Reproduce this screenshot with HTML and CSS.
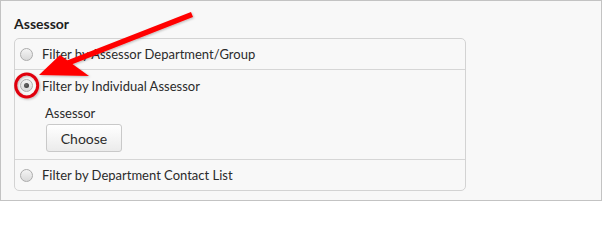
FILE: index.html
```
<!DOCTYPE html>
<html>
<head>
<meta charset="utf-8">
<link rel="stylesheet" href="styles.css">
</head>
<body>
<div class="frame">
  <h2 class="title">Assessor</h2>
  <div class="panel">
    <div class="row">
      <div class="option"><span class="radio"></span><span class="label">Filter by Assessor Department/Group</span></div>
    </div>
    <div class="row row-open">
      <div class="option"><span class="radio checked"></span><span class="label">Filter by Individual Assessor</span></div>
      <div class="sub">
        <div class="sub-label">Assessor</div>
        <button class="btn">Choose</button>
      </div>
    </div>
    <div class="row">
      <div class="option"><span class="radio"></span><span class="label">Filter by Department Contact List</span></div>
    </div>
  </div>
  <svg class="annot" width="602" height="201" viewBox="0 0 602 201">
    <defs>
      <filter id="sh" x="-20%" y="-20%" width="140%" height="140%">
        <feDropShadow dx="1" dy="1" stdDeviation="0.8" flood-color="#000" flood-opacity="0.25"/>
      </filter>
    </defs>
    <ellipse cx="26.7" cy="85.5" rx="11" ry="11.5" fill="none" stroke="#e00010" stroke-width="3" filter="url(#sh)"/>
    <g filter="url(#sh)" fill="#ff0000">
      <line x1="192" y1="14.5" x2="68" y2="63" stroke="#ff0000" stroke-width="5.5"/>
      <polygon points="39,75 60,55 89,76"/>
    </g>
  </svg>
</div>
</body>
</html>
```
FILE: styles.css
```
html, body {
  margin: 0;
  padding: 0;
  background: #ffffff;
}
.frame {
  position: relative;
  box-sizing: border-box;
  width: 602px;
  height: 201px;
  border: 1px solid #c3c3c3;
  background: #f8f8f8;
  padding: 14px 0 0 13px;
  font-family: Lato, "Open Sans", sans-serif;
  color: #2b2b2b;
}
.title {
  margin: 0 0 6px 0;
  font-size: 14px;
  line-height: 17px;
  font-weight: 700;
  color: #1e1e1e;
}
.panel {
  box-sizing: border-box;
  width: 452px;
  border: 1px solid #d3d3d3;
  border-radius: 5px;
}
.row {
  border-bottom: 1px solid #d6d6d6;
}
.row:last-child {
  border-bottom: none;
}
.option {
  display: flex;
  align-items: center;
  height: 30px;
  padding-left: 5px;
  font-size: 13px;
}
.row-open .option {
  height: 31px;
}
.radio {
  box-sizing: border-box;
  width: 13px;
  height: 13px;
  border-radius: 50%;
  border: 1px solid #acacac;
  background: linear-gradient(#f4f4f4, #d9d9d9);
  margin-right: 9px;
  display: flex;
  align-items: center;
  justify-content: center;
}
.radio.checked::after {
  content: "";
  width: 5px;
  height: 5px;
  border-radius: 50%;
  background: radial-gradient(circle at 40% 40%, #6a6a6a, #2f2f2f);
}
.label {
  line-height: 16px;
}
.sub {
  padding: 4px 0 7px 31px;
}
.sub-label {
  font-size: 13px;
  line-height: 16px;
  margin-left: -1px;
}
.btn {
  display: block;
  box-sizing: border-box;
  margin-top: 3px;
  width: 76px;
  height: 28px;
  border: 1px solid #c9c9c9;
  border-radius: 3px;
  background: linear-gradient(#ffffff, #ebebeb);
  font-family: Lato, "Open Sans", sans-serif;
  font-size: 14px;
  color: #2b2b2b;
  padding: 0;
}
.annot {
  position: absolute;
  left: -1px;
  top: -1px;
  pointer-events: none;
}
```
